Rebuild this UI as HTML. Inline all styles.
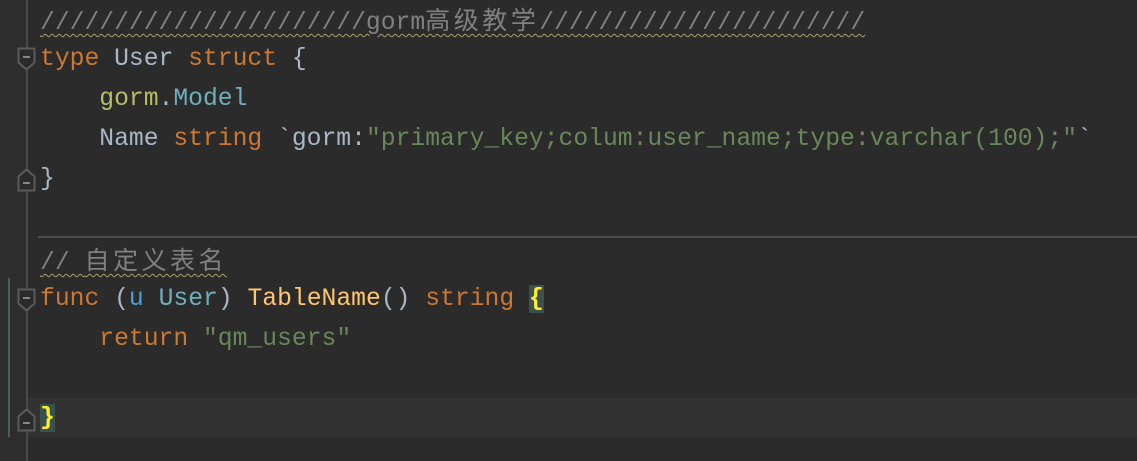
<!DOCTYPE html>
<html><head><meta charset="utf-8"><style>
html,body{margin:0;padding:0;}
body{width:1137px;height:461px;background:#2b2b2b;position:relative;overflow:hidden;font-family:"Liberation Mono","Noto Sans CJK SC",monospace;font-size:24.7px;}
.gut{position:absolute;left:0;top:0;width:27px;height:461px;background:#2d2d2d;}
.gl{position:absolute;left:26px;top:0;width:2px;height:461px;background:#4a4a4a;}
.ln{position:absolute;left:40px;height:40px;line-height:40px;white-space:pre;color:#a9b7c6;}
.k{color:#cc7832}.t{color:#6fafbd}.s{color:#6a8759}.c{color:#808080;text-decoration:underline wavy #a8a36a;text-decoration-thickness:1px;text-underline-offset:4px}
.g{color:#b5bd68}.f{color:#ffc66d}.u{color:#4aa0dc}
.cj{font-family:"Noto Sans CJK SC",sans-serif;font-size:25px;letter-spacing:3.5px}
.cur{position:absolute;left:28px;top:398px;width:1109px;height:39px;background:#323232;}
.sep{position:absolute;left:38px;top:236px;width:1099px;height:2px;background:#4e4e4e;}
.grn{position:absolute;left:8px;top:278px;width:2px;height:159px;background:#47625a;}
.bh{background:#3b514d;color:#ffef28;font-weight:bold}
svg{position:absolute;left:17px;}
</style></head><body>
<div class="gut"></div><div class="gl"></div>
<div class="cur"></div><div class="sep"></div><div class="grn"></div>
<svg style="top:47px" width="20" height="26"><path d="M1.5 1.5H17.5V15.5L9.5 22.5L1.5 15.5Z" fill="#2b2b2b" stroke="#5a5a5a" stroke-width="2"/><path d="M6 10H13" stroke="#888" stroke-width="2"/></svg>
<svg style="top:166px" width="20" height="26"><path d="M1.5 24.5H17.5V10.5L9.5 3.5L1.5 10.5Z" fill="#2b2b2b" stroke="#5a5a5a" stroke-width="2"/><path d="M6 17H13" stroke="#888" stroke-width="2"/></svg>
<svg style="top:288px" width="20" height="26"><path d="M1.5 1.5H17.5V15.5L9.5 22.5L1.5 15.5Z" fill="#2b2b2b" stroke="#5a5a5a" stroke-width="2"/><path d="M6 10H13" stroke="#888" stroke-width="2"/></svg>
<svg style="top:406px" width="20" height="26"><path d="M1.5 24.5H17.5V10.5L9.5 3.5L1.5 10.5Z" fill="#2b2b2b" stroke="#5a5a5a" stroke-width="2"/><path d="M6 17H13" stroke="#888" stroke-width="2"/></svg>
<div class="ln" style="top:-1px"><span class="c">//////////////////////gorm<span class="cj">高级教学</span>//////////////////////</span></div>
<div class="ln" style="top:39px"><span class="k">type</span> User <span class="k">struct</span> {</div>
<div class="ln" style="top:79px">    <span class="g">gorm</span>.<span class="t">Model</span></div>
<div class="ln" style="top:119px">    Name <span class="k">string</span> `gorm:<span class="s">"primary_key;colum:user_name;type:varchar(100);"</span>`</div>
<div class="ln" style="top:159px">}</div>
<div class="ln" style="top:239px"><span class="c">// <span class="cj">自定义表名</span></span></div>
<div class="ln" style="top:279px"><span class="k">func</span> (<span class="u">u</span> <span class="t">User</span>) <span class="f">TableName</span>() <span class="k">string</span> <span class="bh">{</span></div>
<div class="ln" style="top:319px">    <span class="k">return</span> <span class="s">"qm_users"</span></div>
<div class="ln" style="top:398px"><span class="bh">}</span></div>
</body></html>
